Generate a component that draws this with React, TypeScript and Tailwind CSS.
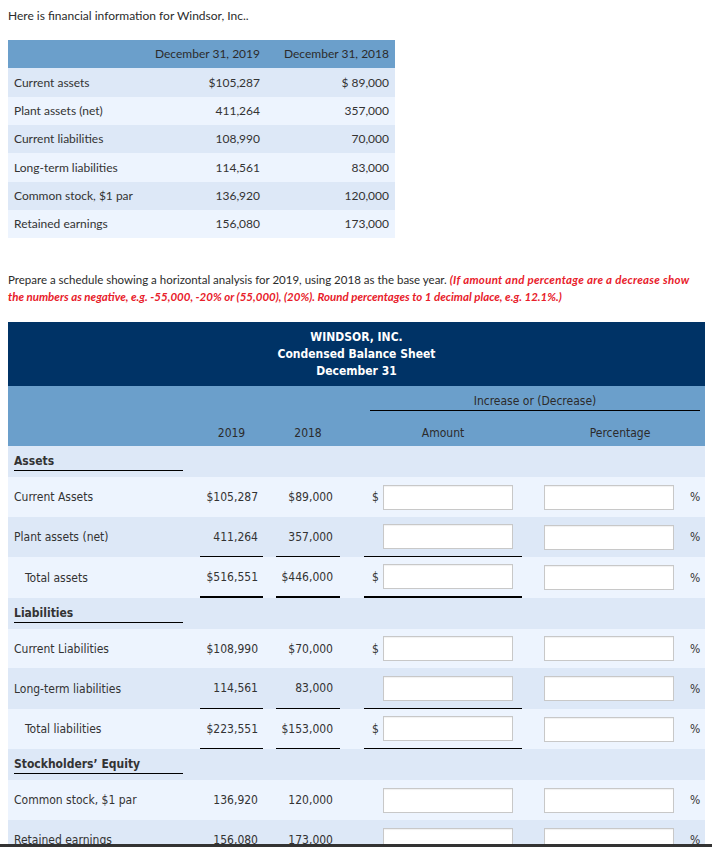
import React from "react";

const topRows: [string, string, string, string][] = [
  ["Current assets", "$105,287", "$ 89,000", "h-[29px] bg-[#dde8f7]"],
  ["Plant assets (net)", "411,264", "357,000", "h-[28px] bg-[#edf4fe]"],
  ["Current liabilities", "108,990", "70,000", "h-[28px] bg-[#dde8f7]"],
  ["Long-term liabilities", "114,561", "83,000", "h-[29px] bg-[#edf4fe]"],
  ["Common stock, $1 par", "136,920", "120,000", "h-[28px] bg-[#dde8f7]"],
  ["Retained earnings", "156,080", "173,000", "h-[28px] bg-[#edf4fe]"],
];

type Row =
  | { kind: "head"; label: string; h: string }
  | {
      kind: "data";
      label: string;
      a: string;
      b: string;
      dollar: boolean;
      indent?: boolean;
      line?: "thin" | "thick";
      bg: string;
      h: string;
    };

const rows: Row[] = [
  { kind: "head", label: "Assets", h: "h-[31px]" },
  { kind: "data", label: "Current Assets", a: "$105,287", b: "$89,000", dollar: true, bg: "bg-[#edf4fe]", h: "h-[40px]" },
  { kind: "data", label: "Plant assets (net)", a: "411,264", b: "357,000", dollar: false, line: "thin", bg: "bg-[#dde8f7]", h: "h-[40px]" },
  { kind: "data", label: "Total assets", a: "$516,551", b: "$446,000", dollar: true, indent: true, line: "thick", bg: "bg-[#edf4fe]", h: "h-[41px]" },
  { kind: "head", label: "Liabilities", h: "h-[31px]" },
  { kind: "data", label: "Current Liabilities", a: "$108,990", b: "$70,000", dollar: true, bg: "bg-[#edf4fe]", h: "h-[39px]" },
  { kind: "data", label: "Long-term liabilities", a: "114,561", b: "83,000", dollar: false, line: "thin", bg: "bg-[#dde8f7]", h: "h-[41px]" },
  { kind: "data", label: "Total liabilities", a: "$223,551", b: "$153,000", dollar: true, indent: true, line: "thin", bg: "bg-[#edf4fe]", h: "h-[40px]" },
  { kind: "head", label: "Stockholders’ Equity", h: "h-[31px]" },
  { kind: "data", label: "Common stock, $1 par", a: "136,920", b: "120,000", dollar: false, bg: "bg-[#edf4fe]", h: "h-[40px]" },
  { kind: "data", label: "Retained earnings", a: "156,080", b: "173,000", dollar: false, bg: "bg-[#dde8f7]", h: "h-[40px]" },
];

function lineCls(line?: "thin" | "thick") {
  if (line === "thin") return "border-b border-black";
  if (line === "thick") return "border-b-2 border-black";
  return "";
}

export default function App() {
  return (
    <div className="h-[847px] overflow-hidden bg-white px-2 pt-[7px] font-['Lato',sans-serif] text-[12px] text-[#333]">
      <p className="leading-[17px] text-[#2b2b2b]">Here is financial information for Windsor, Inc..</p>

      <div className="mt-[16px] w-[387px]">
        <div className="flex h-[28px] items-center bg-[#6b9fcb] text-[#2b2b2b]">
          <div className="flex-1" />
          <div className="w-[112px] text-right">December 31, 2019</div>
          <div className="w-[129px] text-right">December 31, 2018</div>
          <div className="w-[6px]" />
        </div>
        {topRows.map(([l, a, b, cls]) => (
          <div key={l} className={`flex items-center ${cls}`}>
            <div className="flex-1 pl-[6px]">{l}</div>
            <div className="w-[112px] text-right">{a}</div>
            <div className="w-[129px] text-right">{b}</div>
            <div className="w-[6px]" />
          </div>
        ))}
      </div>

      <div className="mt-[33px] text-[11.5px] leading-[17px] text-[#2b2b2b]">
        <div className="whitespace-nowrap">
          Prepare a schedule showing a horizontal analysis for 2019, using 2018 as the base year.{" "}
          <span className="font-bold italic tracking-[0.28px] text-[#e8202a]">
            (If amount and percentage are a decrease show
          </span>
        </div>
        <div className="whitespace-nowrap font-bold italic text-[#e8202a]">
          the numbers as negative, e.g. -55,000, -20% or (55,000), (20%). Round percentages to 1 decimal place, e.g. 12.1%.)
        </div>
      </div>

      <div className="mt-[17px] w-[697px] font-['DejaVu_Sans_Condensed','Liberation_Sans',sans-serif] text-[12px] text-[#333]">
        <div className="flex flex-col items-center bg-[#003366] pb-[6px] pt-[7px] font-bold leading-[17px] text-white">
          <div>WINDSOR, INC.</div>
          <div>Condensed Balance Sheet</div>
          <div>December 31</div>
        </div>
        <div className="bg-[#6b9fcb] text-[#2b2b2b]">
          <div className="flex h-[25px] items-end">
            <div className="w-[362px]" />
            <div className="w-[330px] border-b border-black pb-[1px] text-center leading-[16px]">
              Increase or (Decrease)
            </div>
          </div>
          <div className="flex h-[35px] pt-[14px] leading-[16px]">
            <div className="w-[192px]" />
            <div className="w-[63px] text-center">2019</div>
            <div className="w-[13px]" />
            <div className="w-[64px] text-center">2018</div>
            <div className="w-[24px]" />
            <div className="w-[158px] text-center">Amount</div>
            <div className="w-[22px]" />
            <div className="w-[156px] pr-[4px] text-center">Percentage</div>
          </div>
        </div>

        {rows.map((r, i) =>
          r.kind === "head" ? (
            <div key={i} className={`${r.h} bg-[#dde8f7] pl-[6px] pt-[6px]`}>
              <div className="h-[19px] w-[169px] border-b border-black font-bold leading-[18px]">{r.label}</div>
            </div>
          ) : (
            <div key={i} className={`flex ${r.h} ${r.bg}`}>
              <div className={`flex w-[192px] items-center ${r.indent ? "pl-[17px]" : "pl-[6px]"}`}>{r.label}</div>
              <div className={`flex w-[63px] items-center justify-end pr-[5px] ${lineCls(r.line)}`}>{r.a}</div>
              <div className="w-[13px]" />
              <div className={`flex w-[64px] items-center justify-end pr-[7px] ${lineCls(r.line)}`}>{r.b}</div>
              <div className="w-[24px]" />
              <div className={`flex w-[158px] items-center ${lineCls(r.line)}`}>
                <span className="w-[19px] pl-[8px]">{r.dollar ? "$" : ""}</span>
                <input
                  type="text"
                  aria-label={`${r.label} amount`}
                  className="h-[25px] w-[130px] border border-[#c8c8c8] bg-white shadow-[inset_0_1px_1px_rgba(0,0,0,0.06)] outline-none"
                />
              </div>
              <div className="w-[22px]" />
              <div className="flex w-[156px] items-center">
                <input
                  type="text"
                  aria-label={`${r.label} percentage`}
                  className="h-[25px] w-[130px] border border-[#c8c8c8] bg-white shadow-[inset_0_1px_1px_rgba(0,0,0,0.06)] outline-none"
                />
                <span className="ml-[16px]">%</span>
              </div>
            </div>
          )
        )}
      </div>
      <div className="fixed bottom-0 left-0 h-[3px] w-full bg-[#333]" />
    </div>
  );
}
